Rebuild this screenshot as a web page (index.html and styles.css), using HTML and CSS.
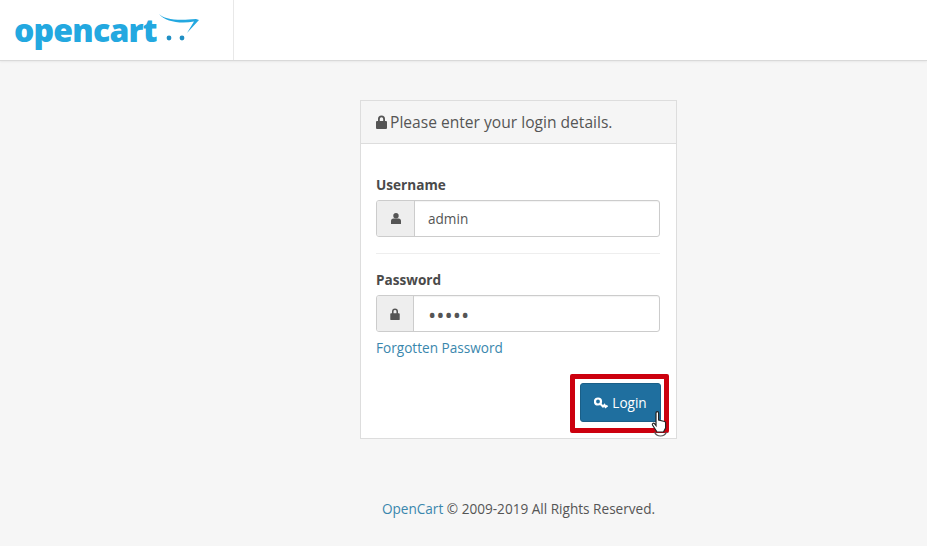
FILE: index.html
```html
<!DOCTYPE html>
<html lang="en">
<head>
  <meta charset="UTF-8">
  <title>OpenCart Administration</title>
  <link rel="stylesheet" href="styles.css">
</head>
<body>

  <header class="topbar">
    <div class="brand">
      <span class="brand-name">opencart</span>
      <svg class="brand-cart" width="40" height="30" viewBox="0 0 40 30">
        <path d="M0 1 C5 6 17 8 37 6 L40 7 L28 20 L35 8.500 C22 11 6 9 0 1 Z" fill="#23a8e0"/>
        <circle cx="10" cy="25" r="2.400" fill="#1f8fc4"/>
        <circle cx="23" cy="25" r="2.400" fill="#1f8fc4"/>
      </svg>
    </div>
  </header>

  <main class="content">
    <section class="panel">
      <h1 class="panel-heading">
        <svg class="heading-icon" width="11" height="14" viewBox="0 0 11 14"><path d="M2 6V4a3.500 3.500 0 0 1 7 0v2h1a1 1 0 0 1 1 1v6a1 1 0 0 1-1 1H1a1 1 0 0 1-1-1V7a1 1 0 0 1 1-1zm1.800 0h3.400V4a1.700 1.700 0 0 0-3.400 0z" fill="#555"/></svg>
        Please enter your login details.
      </h1>
      <form class="panel-body">
        <label class="field-label">Username</label>
        <div class="input-group">
          <span class="addon">
            <svg width="10" height="11" viewBox="0 0 10 11"><circle cx="5" cy="2.800" r="2.700" fill="#555"/><path d="M0 11V8a2.500 2.500 0 0 1 2.500-2.500h5A2.500 2.500 0 0 1 10 8v3z" fill="#555"/></svg>
          </span>
          <span class="input-text">admin</span>
        </div>
        <hr class="divider">
        <label class="field-label">Password</label>
        <div class="input-group">
          <span class="addon addon-narrow">
            <svg width="10" height="12" viewBox="0 0 11 14"><path d="M2 6V4a3.500 3.500 0 0 1 7 0v2h1a1 1 0 0 1 1 1v6a1 1 0 0 1-1 1H1a1 1 0 0 1-1-1V7a1 1 0 0 1 1-1zm1.800 0h3.400V4a1.700 1.700 0 0 0-3.400 0z" fill="#555"/></svg>
          </span>
          <span class="input-text input-dots">•••••</span>
        </div>
        <a class="forgot" href="#">Forgotten Password</a>
        <div class="actions">
          <button class="btn-login" type="button">
            <svg width="14" height="12" viewBox="0 0 14 12"><circle cx="4" cy="4.500" r="3" fill="none" stroke="#fff" stroke-width="2.200"/><path d="M6 6.500 L9 9.500 L10.500 8 L11.500 10 L13.500 8.500" fill="none" stroke="#fff" stroke-width="2"/></svg>
            Login
          </button>
          <span class="highlight"></span>
          <svg class="pointer" width="18" height="28" viewBox="0 0 18 28">
            <path d="M5 2 a1.300 1.300 0 0 1 2.600 0 V9 l6 1.500 a1.500 1.500 0 0 1 1 1.500 V17 L12.500 21 H6 L1.500 14 a1.200 1.200 0 0 1 2-1.300 L5 14.500 Z" fill="#fff" stroke="#222" stroke-width="1.200"/>
            <path d="M3.500 21 a6.500 6.500 0 0 0 12 0" fill="none" stroke="#555" stroke-width="1.200"/>
          </svg>
        </div>
      </form>
    </section>
  </main>

  <footer class="site-footer">
    <a href="#">OpenCart</a> © 2009-2019 All Rights Reserved.
  </footer>

</body>
</html>
```

FILE: styles.css
```css
html, body {
  margin: 0;
  height: 100%;
}

body {
  background: #f6f6f6;
  color: #555;
  font-family: "Open Sans", sans-serif;
  font-size: 13.6px;
  overflow: hidden;
}

.topbar {
  display: flex;
  height: 60px;
  background: #fff;
  border-bottom: 1px solid #d9d9d9;
  box-shadow: 0 1px 2px rgba(0, 0, 0, 0.06);
}

.brand {
  display: flex;
  width: 234px;
  padding: 11px 0 0 14px;
  box-sizing: border-box;
  border-right: 1px solid #e8e8e8;
}

.brand-name {
  color: #23a8e0;
  font-size: 32px;
  font-weight: 800;
  line-height: 38px;
  letter-spacing: -0.8px;
}

.brand-cart {
  margin: 2px 0 0 2px;
}

.content {
  display: flex;
  justify-content: center;
  padding: 39px 0 0 110px;
}

.panel {
  width: 317px;
  height: 339px;
  box-sizing: border-box;
  background: #fff;
  border: 1px solid #ddd;
}

.panel-heading {
  display: flex;
  align-items: center;
  gap: 3px;
  height: 43px;
  padding: 0 15px 1px;
  box-sizing: border-box;
  margin: 0;
  background: #f5f5f5;
  border-bottom: 1px solid #ddd;
  color: #555;
  font-size: 15.6px;
  font-weight: 400;
}

.panel-body {
  display: flex;
  flex-direction: column;
  padding: 32px 16px 0 15px;
}

.field-label {
  height: 24px;
  color: #4a4a4a;
  font-weight: 700;
  line-height: 18px;
}

.input-group {
  display: flex;
  height: 37px;
  box-sizing: border-box;
  border: 1px solid #ccc;
  border-radius: 3px;
  box-shadow: inset 0 1px 1px rgba(0, 0, 0, 0.05);
  overflow: hidden;
}

.addon {
  display: flex;
  flex: none;
  align-items: center;
  justify-content: center;
  width: 37px;
  background: #eee;
  border-right: 1px solid #ccc;
}

.addon-narrow {
  width: 36px;
}

.input-text {
  padding-left: 13px;
  line-height: 35px;
}

.input-dots {
  padding-left: 14px;
  font-size: 22px;
  line-height: 36px;
}

.divider {
  width: 100%;
  height: 1px;
  margin: 16px 0 17px;
  border: 0;
  background: #eee;
}

.forgot {
  margin-top: 7px;
  color: #3a87ad;
  line-height: 18px;
  text-decoration: none;
}

.actions {
  position: relative;
  display: flex;
  justify-content: flex-end;
  margin: 26px -1px 0 0;
}

.btn-login {
  display: flex;
  align-items: center;
  justify-content: center;
  gap: 4px;
  width: 81px;
  height: 39px;
  padding: 0;
  background: #1f6f9f;
  border: 1px solid #1a5f88;
  border-radius: 3px;
  color: #fff;
  font-family: inherit;
  font-size: 13.6px;
}

/* red annotation box drawn over the button */
.highlight {
  position: absolute;
  top: -9px;
  right: -8px;
  width: 99px;
  height: 59px;
  box-sizing: border-box;
  border: 5px solid #cc000e;
  border-radius: 2px;
}

.pointer {
  position: absolute;
  top: 28px;
  right: -8px;
}

.site-footer {
  margin-top: 61px;
  padding-left: 110px;
  text-align: center;
  color: #555;
  line-height: 18px;
}

.site-footer a {
  color: #3a87ad;
  text-decoration: none;
}
```
